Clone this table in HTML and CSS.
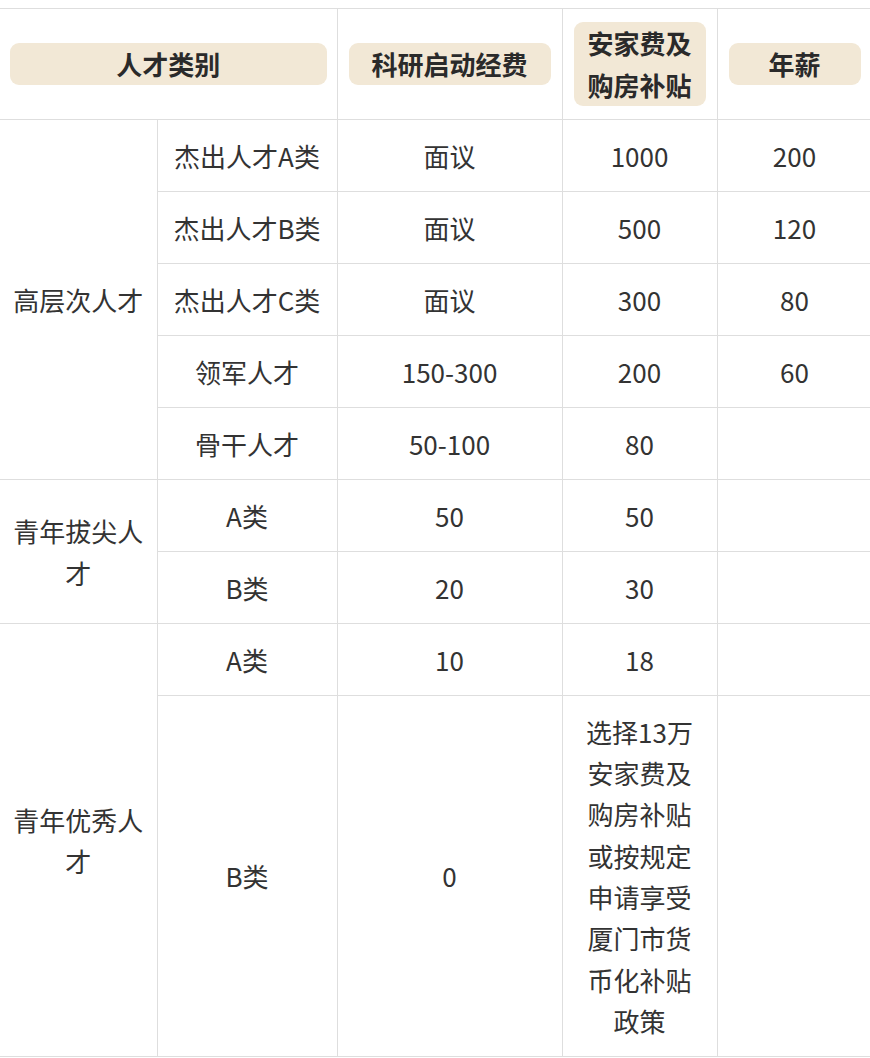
FILE: index.html
```html
<!DOCTYPE html>
<html lang="zh-CN">
<head>
<meta charset="utf-8">
<title>人才类别</title>
<link rel="stylesheet" href="styles.css">
</head>
<body>
<table class="talent">
  <colgroup>
    <col class="c1"><col class="c2"><col class="c3"><col class="c4"><col class="c5">
  </colgroup>
  <thead>
    <tr>
      <th colspan="2"><div class="pill">人才类别</div></th>
      <th><div class="pill">科研启动经费</div></th>
      <th><div class="pill">安家费及<br>购房补贴</div></th>
      <th><div class="pill">年薪</div></th>
    </tr>
  </thead>
  <tbody>
    <tr><td rowspan="5">高层次人才</td><td>杰出人才A类</td><td>面议</td><td>1000</td><td>200</td></tr>
    <tr><td>杰出人才B类</td><td>面议</td><td>500</td><td>120</td></tr>
    <tr><td>杰出人才C类</td><td>面议</td><td>300</td><td>80</td></tr>
    <tr><td>领军人才</td><td>150-300</td><td>200</td><td>60</td></tr>
    <tr><td>骨干人才</td><td>50-100</td><td>80</td><td></td></tr>
    <tr><td rowspan="2">青年拔尖人<br>才</td><td>A类</td><td>50</td><td>50</td><td></td></tr>
    <tr><td>B类</td><td>20</td><td>30</td><td></td></tr>
    <tr><td rowspan="2">青年优秀人<br>才</td><td>A类</td><td>10</td><td>18</td><td></td></tr>
    <tr><td>B类</td><td>0</td><td>选择13万<br>安家费及<br>购房补贴<br>或按规定<br>申请享受<br>厦门市货<br>币化补贴<br>政策</td><td></td></tr>
  </tbody>
</table>
</body>
</html>
```

FILE: styles.css
```css
html, body {
  margin: 0;
  padding: 0;
  background: #ffffff;
}
body {
  padding-top: 8px;
  font-family: "Noto Sans CJK SC", "Noto Sans", sans-serif;
  color: #333333;
}
.talent {
  border-collapse: collapse;
  table-layout: fixed;
  width: 872px;
}
.c1 { width: 157px; }
.c2 { width: 180px; }
.c3 { width: 225px; }
.c4 { width: 155px; }
.c5 { width: 155px; }
.talent th,
.talent td {
  border: 1px solid #dedede;
  text-align: center;
  vertical-align: middle;
  font-size: 26px;
  line-height: 41.3px;
}
.talent tr > :first-child { border-left: none; }
.talent th {
  padding: 13px 11px;
}
.talent th:first-child { padding-left: 10px; padding-right: 10px; }
.talent td {
  padding: 15px 4px 14.7px;
  font-weight: 400;
}
.pill {
  background: #f2e8d6;
  border-radius: 9px;
  font-weight: 700;
  line-height: 42px;
  color: #2a2a2a;
}
```
